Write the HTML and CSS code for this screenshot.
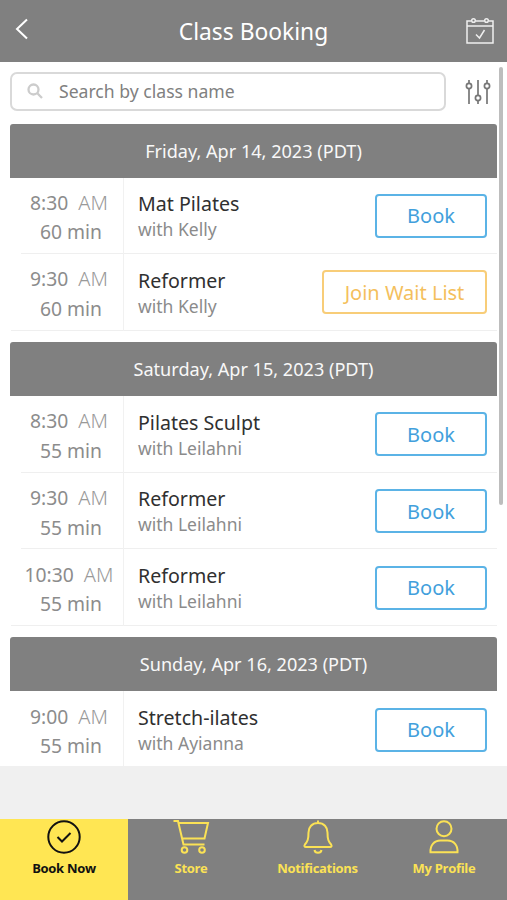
FILE: index.html
```html
<!DOCTYPE html>
<html lang="en">
<head>
<meta charset="utf-8">
<title>Class Booking</title>
<link rel="stylesheet" href="styles.css">
</head>
<body>
<div class="app">
  <header class="topbar">
    <svg class="back" width="14" height="22" viewBox="0 0 14 22"><path d="M12 1.500 2 11l10 9.500"/></svg>
    <h1>Class Booking</h1>
    <svg class="calendar" width="28" height="28" viewBox="0 0 28 28"><path d="M5.500 4H1v22h26V4h-4.500M9.500 4h9M1 9h26M10 17.500l3.500 3.500 5-8"/><circle cx="7.500" cy="3.500" r="1.800"/><circle cx="20.500" cy="3.500" r="1.800"/></svg>
  </header>
  <main class="content">
    <div class="search-row">
      <div class="search">
        <svg width="17" height="17" viewBox="0 0 17 17"><circle cx="6.500" cy="6.500" r="5"/><path d="m10.300 10.300 4.700 4.700"/></svg>
        <span>Search by class name</span>
      </div>
      <svg class="filter" width="26" height="26" viewBox="0 0 26 26"><path d="M4 1v3.500M4 9.500V25M13 1v15M13 21.500V25M22 1v3.500M22 9.500V25"/><circle cx="4" cy="7" r="2.600"/><circle cx="13" cy="19" r="2.600"/><circle cx="22" cy="7" r="2.600"/></svg>
    </div>
    <section class="day">
      <h2>Friday, Apr 14, 2023 (PDT)</h2>
      <article class="slot"><div class="time"><p>8:30 <i>AM</i></p><p>60 min</p></div><div class="info"><h3>Mat Pilates</h3><p>with Kelly</p></div><button class="book">Book</button></article>
      <article class="slot"><div class="time"><p>9:30 <i>AM</i></p><p>60 min</p></div><div class="info"><h3>Reformer</h3><p>with Kelly</p></div><button class="book wait">Join Wait List</button></article>
    </section>
    <section class="day">
      <h2>Saturday, Apr 15, 2023 (PDT)</h2>
      <article class="slot"><div class="time"><p>8:30 <i>AM</i></p><p>55 min</p></div><div class="info"><h3>Pilates Sculpt</h3><p>with Leilahni</p></div><button class="book">Book</button></article>
      <article class="slot"><div class="time"><p>9:30 <i>AM</i></p><p>55 min</p></div><div class="info"><h3>Reformer</h3><p>with Leilahni</p></div><button class="book">Book</button></article>
      <article class="slot"><div class="time"><p>10:30 <i>AM</i></p><p>55 min</p></div><div class="info"><h3>Reformer</h3><p>with Leilahni</p></div><button class="book">Book</button></article>
    </section>
    <section class="day">
      <h2>Sunday, Apr 16, 2023 (PDT)</h2>
      <article class="slot"><div class="time"><p>9:00 <i>AM</i></p><p>55 min</p></div><div class="info"><h3>Stretch-ilates</h3><p>with Ayianna</p></div><button class="book">Book</button></article>
    </section>
    <div class="scrollbar"></div>
  </main>
  <nav class="tabs">
    <a class="active"><svg width="36" height="36" viewBox="0 0 36 36"><circle cx="18" cy="18" r="15.700"/><path d="m11.500 18 4.500 4.500 8.500-8.500"/></svg><span>Book Now</span></a>
    <a><svg width="40" height="36" viewBox="0 0 40 36"><path d="M2.500 2h4.500l5.500 23.500h21M8.200 4H37l-3.500 15.500H11.500"/><circle cx="13.500" cy="31" r="2.800"/><circle cx="31" cy="31" r="2.800"/></svg><span>Store</span></a>
    <a><svg width="36" height="36" viewBox="0 0 36 36"><path d="M18 1.500v2.500M18 4c-6 0-9.500 4-9.500 9.500 0 7-1 9-3.600 12-1 1.300-.4 2.500 1.100 2.500h24c1.500 0 2.100-1.200 1.100-2.500-2.600-3-3.600-5-3.600-12C27.500 8 24 4 18 4ZM14.500 31c.5 3.600 6.500 3.600 7 0"/></svg><span>Notifications</span></a>
    <a><svg width="36" height="36" viewBox="0 0 36 36"><circle cx="18" cy="9.700" r="7.500"/><path d="M4.500 33.300c-.5-7 3.500-11.800 10-11.800h7c6.500 0 10.500 4.800 10 11.800Z"/></svg><span>My Profile</span></a>
  </nav>
</div>
</body>
</html>
```
FILE: styles.css
```css
* { box-sizing: border-box; margin: 0; padding: 0; }
body { font-family: "Noto Sans", "Open Sans", sans-serif; background: #f0f0f0; color: #333; }
svg { display: block; fill: none; stroke: currentColor; stroke-width: 2; flex: none; }
.app { width: 507px; height: 900px; display: flex; flex-direction: column; overflow: hidden; }
.topbar { height: 61.5px; background: #808080; color: #fff; display: grid; grid-template-columns: 60px 1fr 60px; align-items: center; flex: none; }
.back { margin: -4px 0 0 14.5px; stroke-width: 2; }
.calendar { margin: 0 0 0 19px; stroke-width: 1.5; color: #eee; }
h1 { font-size: 22.8px; font-weight: 400; text-align: center; line-height: 30px; margin-top: 3px; }
.content { position: relative; height: 704.5px; background: #fff; padding: 10.5px 10px 0; flex: none; overflow: hidden; }
.search-row { display: flex; align-items: center; height: 39px; margin-bottom: 12.5px; }
.search { width: 436px; height: 39px; border: 2px solid #d9d9d9; border-radius: 7px; display: flex; align-items: center; gap: 15px; padding-left: 15px; color: #808080; font-size: 17.6px; }
.search span { margin-top: -1px; }
.search svg { color: #ccc; stroke-width: 2.3; }
.filter { margin-left: 19px; color: #777; stroke-width: 1.7; }
.day { margin-bottom: 11.5px; }
h2 { height: 54px; line-height: 54px; background: #808080; color: #f8f8f8; border-radius: 3px 3px 0 0; text-align: center; font-size: 18.1px; font-weight: 400; }
.slot { height: 76.6px; display: flex; align-items: center; padding-right: 10px; background: linear-gradient(#efefef, #efefef) 11px 100% / 476px 1px no-repeat; }
.slot:last-child { background-position: 1px 100%; background-size: 486px 1px; }
.time { width: 114px; height: 100%; border-right: 1px solid #f1f1f1; padding: 10.3px 0 0 5px; text-align: center; font-size: 19.3px; line-height: 29.5px; color: #8c8c8c; white-space: nowrap; }
.time p + p { padding-left: 4px; }
.time i { font-style: normal; font-weight: 300; font-size: 20px; color: #999; margin-left: 5px; }
.info { flex: 1; padding: 1.4px 0 0 14px; white-space: nowrap; }
h3 { font-size: 19.6px; line-height: 26px; font-weight: 400; color: #303030; }
.info p { font-size: 17.5px; line-height: 25px; color: #8b8b8b; }
.book { width: 112px; height: 44px; border: 2px solid #5bb3e6; border-radius: 4px; background: #fff; color: #429fdc; font: 400 20px "Noto Sans", sans-serif; }
.wait { width: 165px; border-color: #f8cd78; color: #f4bf5d; }
.scrollbar { position: absolute; right: 4px; top: 5px; width: 4px; height: 438px; background: #bdbdbd; border-radius: 2px; }
.tabs { margin-top: auto; height: 81.5px; background: #808080; color: #fbe255; display: grid; grid-template-columns: 128px 126px 127px 126px; flex: none; }
.tabs a { display: flex; flex-direction: column; align-items: center; font: 700 13px/20px "Open Sans", sans-serif; letter-spacing: -.3px; }
.tabs span { margin-top: 3px; }
.tabs .active { background: #ffe653; color: #111; }
```
